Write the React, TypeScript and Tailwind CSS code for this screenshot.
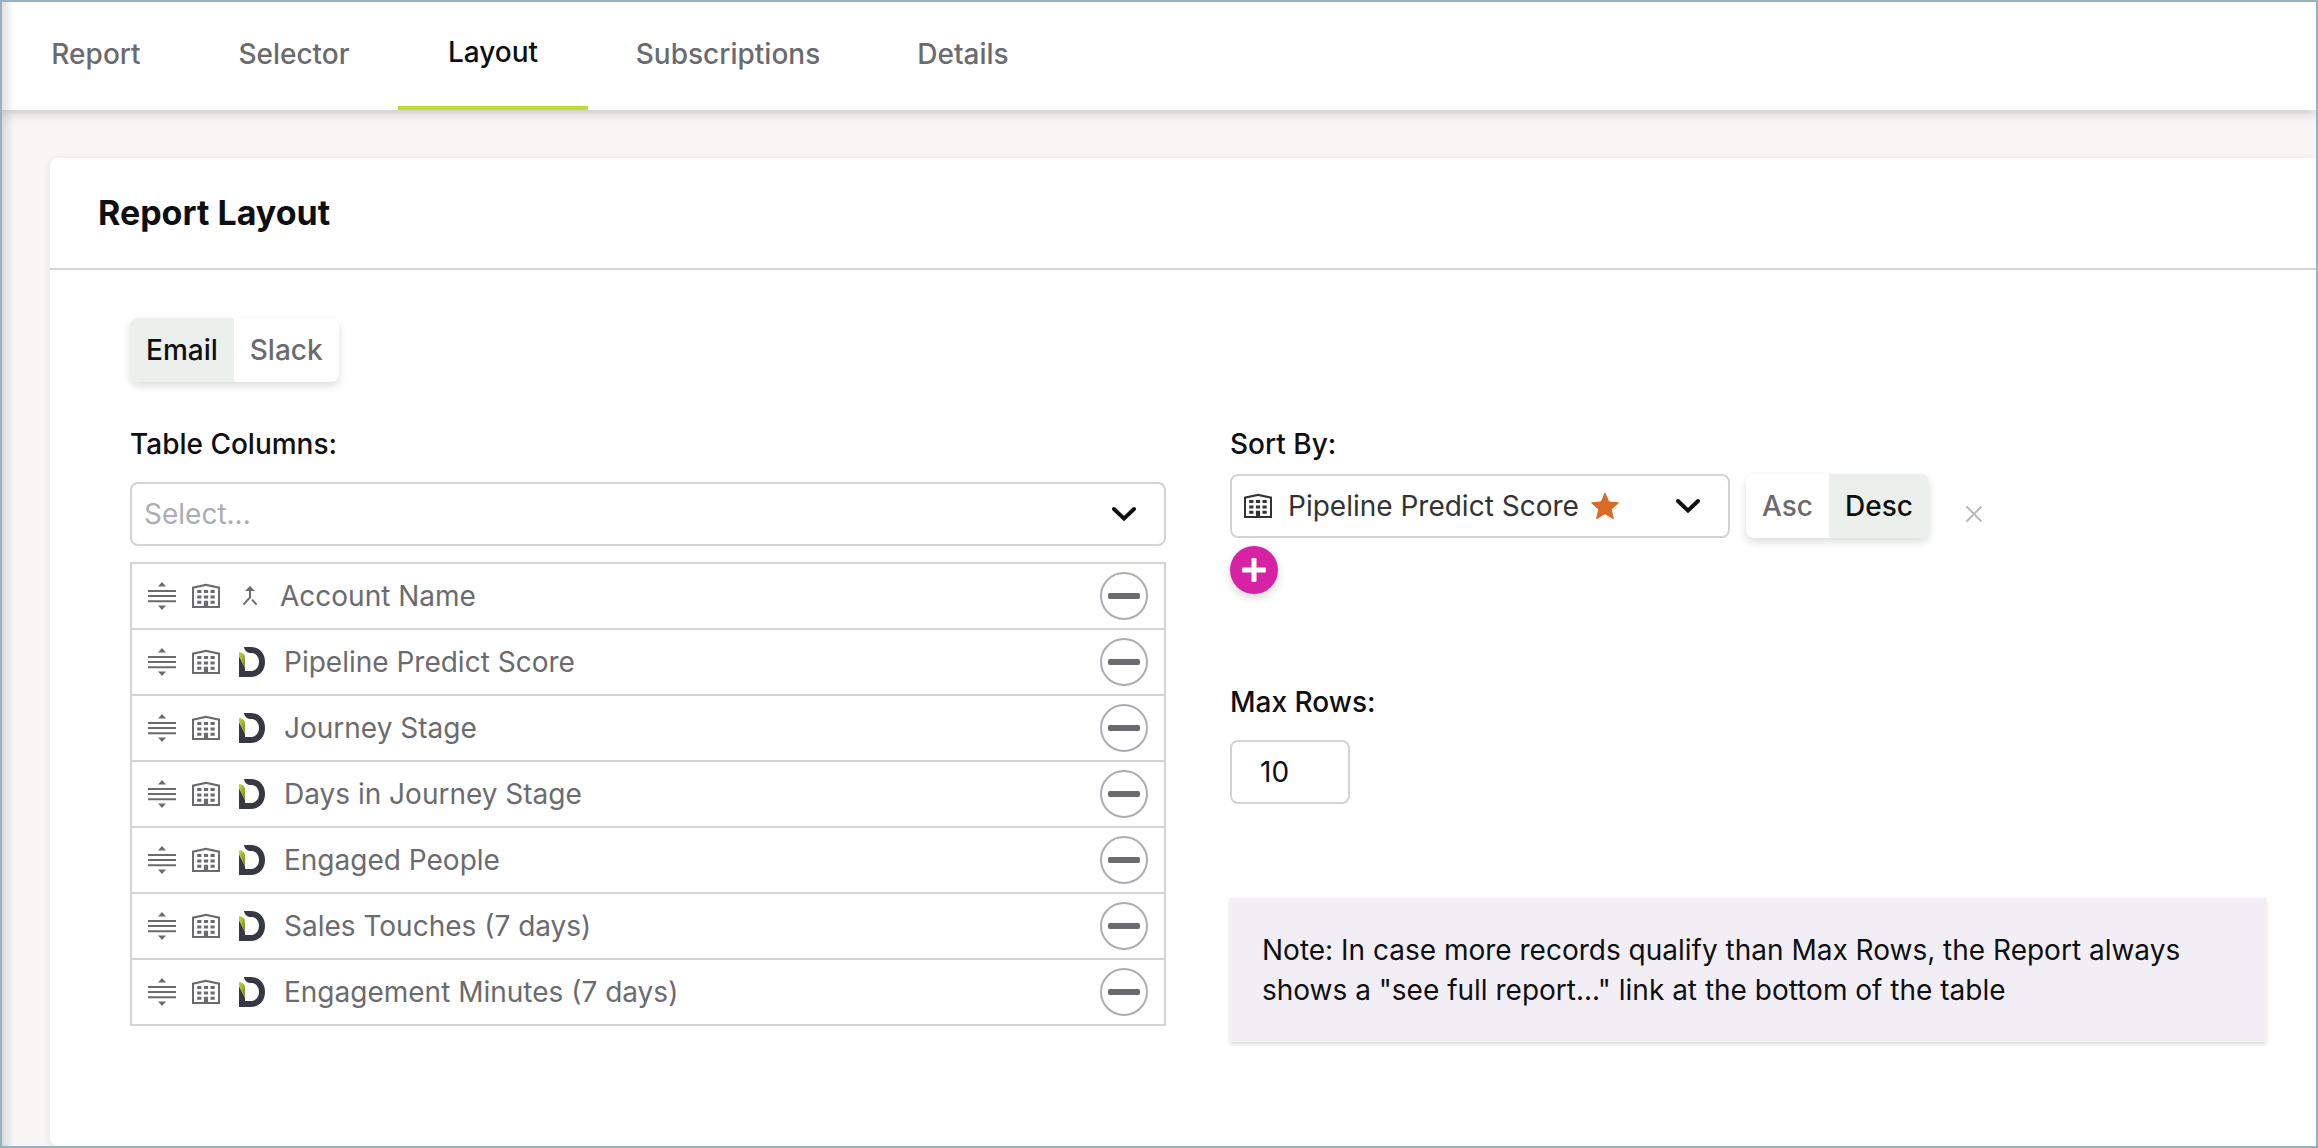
import { useState } from "react";
import clsx from "clsx";

const TABS = [
  { name: "Report", width: "w-[188px]" },
  { name: "Selector", width: "w-[208px]" },
  { name: "Layout", width: "w-[190px]" },
  { name: "Subscriptions", width: "w-[280px]" },
  { name: "Details", width: "w-[190px]" },
];

const COLUMNS = [
  { name: "Account Name", source: "merge" },
  { name: "Pipeline Predict Score", source: "demand" },
  { name: "Journey Stage", source: "demand" },
  { name: "Days in Journey Stage", source: "demand" },
  { name: "Engaged People", source: "demand" },
  { name: "Sales Touches (7 days)", source: "demand" },
  { name: "Engagement Minutes (7 days)", source: "demand" },
];

function DragIcon() {
  return (
    <svg viewBox="0 0 28 28" className="h-7 w-7 shrink-0" fill="currentColor" aria-hidden="true">
      <path d="M14 0l4 4.4h-8zM14 28l4-4.4h-8z" />
      <path d="M0 8h28v2H0zM0 13h28v2H0zM0 18.2h28v2H0z" />
    </svg>
  );
}

function BuildingIcon() {
  return (
    <svg viewBox="0 0 28 28" className="h-7 w-7 shrink-0" fill="currentColor" aria-hidden="true">
      <path
        fillRule="evenodd"
        d="M0 4.8L14 1.8l14 3V26H0zM2 6.4V24h24V6.4L14 3.9z"
      />
      <path d="M5.2 8h4.2v3H5.2zM11.9 8h4.2v3h-4.2zM18.5 8h4.2v3h-4.2zM5.2 13.4h4.2v3H5.2zM11.9 13.4h4.2v3h-4.2zM18.5 13.4h4.2v3h-4.2zM5.2 18.8h4.2v3H5.2zM11.9 18.8h4.2V25h-4.2zM18.5 18.8h4.2v3h-4.2z" />
    </svg>
  );
}

function MergeIcon() {
  return (
    <svg viewBox="0 0 16 20" className="h-5 w-4 shrink-0" fill="none" aria-hidden="true">
      <path d="M8 0l5 5H3z" fill="currentColor" />
      <path d="M8 4v7.4L1.4 18.6M10 13.6l4.6 5" stroke="currentColor" strokeWidth="2" />
    </svg>
  );
}

function BrandIcon() {
  return (
    <svg viewBox="0 0 78 90" className="h-[30px] w-[26px] shrink-0" aria-hidden="true">
      <defs>
        <linearGradient id="leaf" x1="0" y1="0" x2="0.6" y2="1">
          <stop offset="0" stopColor="#c4dc30" />
          <stop offset="1" stopColor="#7d8f2c" />
        </linearGradient>
      </defs>
      <path
        fill="#363843"
        d="M15 0h20c25 0 43 18 43 45S60 90 35 90H0V27l18 36v9h17c15 0 25-11 25-27S50 18 37 18C25 18 17 12 15 0z"
      />
      <path fill="url(#leaf)" d="M0 15c11 1 18 7 18 16v32L0 27z" />
    </svg>
  );
}

function ChevronIcon() {
  return (
    <svg viewBox="0 0 24 16" className="pointer-events-none h-4 w-6 shrink-0" fill="none" aria-hidden="true">
      <path d="M2 3l10 9.6L22 3" stroke="#0f0f11" strokeWidth="4" strokeLinecap="round" />
    </svg>
  );
}

type ToggleProps = {
  label: string;
  options: string[];
  value: string;
  onChange: (value: string) => void;
};

function Toggle({ label, options, value, onChange }: ToggleProps) {
  return (
    <div
      role="group"
      aria-label={label}
      className="flex h-16 w-fit shrink-0 overflow-hidden rounded-lg bg-white shadow-[0_4px_8px_rgba(15,15,17,0.14)]"
    >
      {options.map((option) => (
        <button
          key={option}
          type="button"
          aria-pressed={option === value}
          onClick={() => onChange(option)}
          className={clsx(
            "cursor-pointer px-4 font-medium",
            option === value ? "bg-[#ebf0ec] text-[#0f0f11]" : "text-[#6b6b6f]"
          )}
        >
          {option}
        </button>
      ))}
    </div>
  );
}

export default function App() {
  const [tab, setTab] = useState("Layout");
  const [channel, setChannel] = useState("Email");
  const [order, setOrder] = useState("Desc");
  const [columns, setColumns] = useState(COLUMNS);
  const [maxRows, setMaxRows] = useState("10");

  return (
    <div className="relative flex min-h-screen flex-col overflow-hidden border-2 border-[#94b2bf] bg-[#f9f7f6] font-['Inter',sans-serif] text-[28px] leading-10 text-[#0f0f11]">
      {/* shadow cast by the side menu */}
      <div className="pointer-events-none absolute inset-y-0 left-0 z-20 w-3 bg-linear-to-r from-black/12 to-transparent" />

      <nav className="relative z-10 flex h-[108px] bg-white shadow-[0_2px_12px_rgba(15,15,30,0.25)]">
        {TABS.map(({ name, width }) => (
          <a
            key={name}
            href={`#${name.toLowerCase()}`}
            onClick={() => setTab(name)}
            className={clsx(
              "flex items-center justify-center pb-1 font-medium",
              width,
              name === tab ? "border-b-4 border-[#bfdb32] text-[#0f0f11]" : "text-[#6b6b6f]"
            )}
          >
            {name}
          </a>
        ))}
      </nav>

      <main className="flex grow flex-col pt-12 pl-12">
        <section className="grow rounded-l-lg bg-white shadow-[0_2px_8px_rgba(15,15,30,0.1)]">
          <header className="flex h-28 items-center border-b-2 border-[#d3d3d3] px-12">
            <h1 className="text-[34px] font-bold">Report Layout</h1>
          </header>

          <div className="pt-12 pr-[50px] pb-20 pl-20">
            <Toggle
              label="Channel"
              options={["Email", "Slack"]}
              value={channel}
              onChange={setChannel}
            />

            <div className="mt-[42px] grid grid-cols-2 gap-16">
              <div>
                <label htmlFor="columns" className="block font-medium">
                  Table Columns:
                </label>
                <div className="mt-[18px] flex h-16 items-center rounded-lg border-2 border-[#d3d3d3] pr-7">
                  <select
                    id="columns"
                    defaultValue=""
                    className="h-full grow appearance-none pl-3 text-[#acacb4] outline-none"
                  >
                    <option value="">Select...</option>
                  </select>
                  <ChevronIcon />
                </div>

                <ul className="mt-4 border-2 border-b-0 border-[#d3d3d3] text-[#6b6b6f]">
                  {columns.map((column) => (
                    <li
                      key={column.name}
                      className="flex h-[66px] items-center border-b-2 border-[#d3d3d3] px-4"
                    >
                      <DragIcon />
                      <span className="ml-4 flex">
                        <BuildingIcon />
                      </span>
                      <span
                        className={clsx(
                          "flex",
                          column.source === "merge" ? "mr-[22px] ml-[22px]" : "mr-[19px] ml-[19px]"
                        )}
                      >
                        {column.source === "merge" ? <MergeIcon /> : <BrandIcon />}
                      </span>
                      {column.name}
                      <button
                        type="button"
                        aria-label={`Remove ${column.name}`}
                        onClick={() => setColumns(columns.filter((c) => c !== column))}
                        className="ml-auto flex h-12 w-12 cursor-pointer items-center justify-center rounded-full border-2 border-[#acacb4]"
                      >
                        <span className="h-1.5 w-8 rounded-xs bg-[#6b6b6f]" />
                      </button>
                    </li>
                  ))}
                </ul>
              </div>

              <div>
                <label htmlFor="sort" className="block font-medium">
                  Sort By:
                </label>
                <div className="mt-[10px] flex items-center">
                  <div className="flex h-16 w-[500px] items-center rounded-lg border-2 border-[#d3d3d3] pr-7 pl-3 text-[#333]">
                    <BuildingIcon />
                    <select id="sort" className="ml-4 h-full appearance-none outline-none">
                      <option>Pipeline Predict Score</option>
                    </select>
                    <svg viewBox="0 0 28 28" className="ml-3 h-7 w-7 shrink-0" aria-hidden="true">
                      <path
                        fill="#d96b25"
                        stroke="#d96b25"
                        strokeWidth="1"
                        strokeLinejoin="round"
                        d="M14 1l3.8 8.9 9.7.9-7.3 6.4 2.2 9.5L14 21.7l-8.4 5 2.2-9.5L.5 10.8l9.7-.9z"
                      />
                    </svg>
                    <span className="ml-auto flex">
                      <ChevronIcon />
                    </span>
                  </div>
                  <div className="ml-4">
                    <Toggle
                      label="Sort order"
                      options={["Asc", "Desc"]}
                      value={order}
                      onChange={setOrder}
                    />
                  </div>
                  <button type="button" aria-label="Clear sort" className="mt-4 ml-9 cursor-pointer">
                    <svg viewBox="0 0 18 18" className="h-[18px] w-[18px]" aria-hidden="true">
                      <path d="M1.5 1.5l15 15M16.5 1.5l-15 15" stroke="#b9b9bb" strokeWidth="2" />
                    </svg>
                  </button>
                </div>
                <button
                  type="button"
                  aria-label="Add sort"
                  className="mt-2 flex h-12 w-12 cursor-pointer items-center justify-center rounded-full bg-[#d622a4] shadow-[0_4px_8px_rgba(15,15,17,0.16)]"
                >
                  <svg viewBox="0 0 24 24" className="h-6 w-6" fill="#fff" aria-hidden="true">
                    <rect x="0" y="9.5" width="24" height="5" rx="1" />
                    <rect x="9.5" y="0" width="5" height="24" rx="1" />
                  </svg>
                </button>

                <label htmlFor="max-rows" className="mt-[88px] block font-medium">
                  Max Rows:
                </label>
                <input
                  id="max-rows"
                  type="text"
                  value={maxRows}
                  onChange={(e) => setMaxRows(e.target.value)}
                  className="mt-[18px] block h-16 w-[120px] rounded-lg border-2 border-[#d3d3d3] px-7 outline-none"
                />

                <p className="mt-[94px] bg-[#f1eef5] p-8 shadow-[0_2px_4px_rgba(15,15,17,0.16)]">
                  Note: In case more records qualify than Max Rows, the Report always shows a
                  "see full report..." link at the bottom of the table
                </p>
              </div>
            </div>
          </div>
        </section>
      </main>
    </div>
  );
}
